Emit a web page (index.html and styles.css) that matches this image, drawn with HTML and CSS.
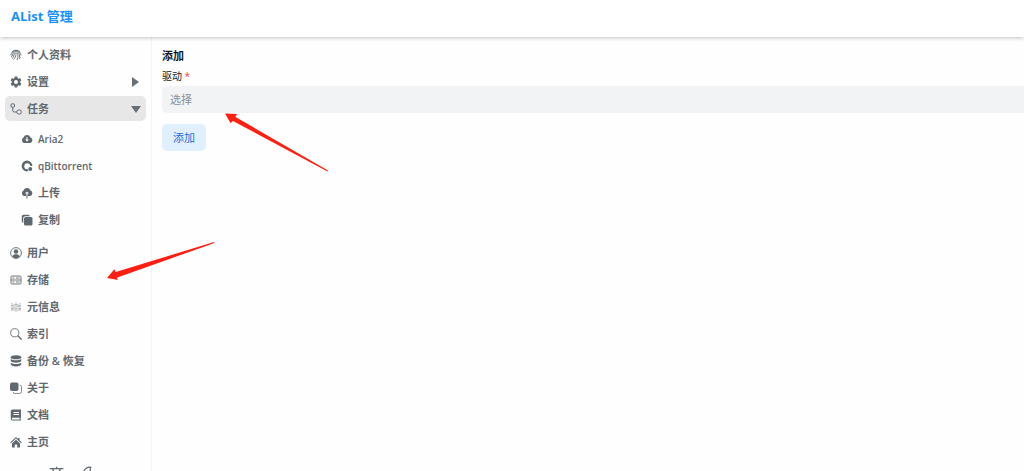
FILE: index.html
```
<!DOCTYPE html>
<html lang="zh-CN">
<head>
<meta charset="utf-8">
<meta name="viewport" content="width=device-width, initial-scale=1">
<title>AList 管理</title>
<link rel="stylesheet" href="styles.css">
</head>
<body>
<header class="header"><a class="brand" href="#">AList 管理</a></header>
<div class="layout">
  <nav class="sidebar">
    <a class="item" href="#"><svg class="icon" viewBox="0 0 24 24" fill="none" stroke="currentColor" stroke-width="1.700"><path d="M4 6a10.500 10.500 0 0 1 16 0M2 13a10 10 0 0 1 20 0M2 16q3-1 3-4a7 7 0 0 1 14 0v5M4 19q4-2 4-7a4 4 0 0 1 8 0q0 6-2 10M7 21q5-4 5-10M18 20l3-4"/></svg>个人资料</a>
    <button class="item" type="button"><svg class="icon" viewBox="0 0 24 24" fill="currentColor" fill-rule="evenodd"><path d="M9.500 1h5l.7 3.300 1.800 1 3.200-1.100 2.500 4.300-2.500 2.300v2.400l2.500 2.300-2.500 4.300-3.200-1.100-1.800 1-.7 3.300h-5l-.7-3.300-1.800-1-3.200 1.100-2.500-4.300 2.500-2.300v-2.400L1.300 8.500l2.500-4.300L7 5.300l1.800-1zM12 8a4 4 0 1 0 0 8 4 4 0 0 0 0-8z"/></svg>设置<svg class="caret" viewBox="0 0 10 10"><path d="M1 0l7 5-7 5z"/></svg></button>
    <button class="item active" type="button"><svg class="icon" viewBox="0 0 24 24" fill="none" stroke="currentColor" stroke-width="2"><rect x="2" y="1.500" width="7" height="7" rx="2.500"/><rect x="14" y="14" width="8.500" height="8" rx="3"/><path d="M5.500 9v6q0 3 3 3H14"/></svg>任务<svg class="caret" viewBox="0 0 10 10"><path d="M0 2h10L5 9z"/></svg></button>
    <div class="submenu">
      <a class="item latin" href="#"><svg class="icon" viewBox="0 0 24 24" fill="currentColor" fill-rule="evenodd"><path d="M6 20a6 6 0 0 1-1-11 7.500 7.500 0 0 1 14 0 5.700 5.700 0 0 1-1 11zM11 8v5H8l4 4 4-4h-3V8z"/></svg>Aria2</a>
      <a class="item latin" href="#"><svg class="icon" viewBox="0 0 24 24" fill="currentColor"><path d="M22.800 12A10.800 10.800 0 1 0 12 22.800v-4.300A6 6 0 1 1 18.500 12z"/><circle cx="18.500" cy="18" r="4"/><circle cx="12.500" cy="20.500" r="2"/></svg>qBittorrent</a>
      <a class="item" href="#"><svg class="icon" viewBox="0 0 24 24" fill="currentColor" fill-rule="evenodd"><path d="M6 18a6 6 0 0 1-1-11 7.500 7.500 0 0 1 14 0 5.700 5.700 0 0 1-1 11h-5v-5h3l-4-4-4 4h3v5z"/><path d="M11 17h2v6h-2z"/></svg>上传</a>
      <a class="item" href="#"><svg class="icon" viewBox="0 0 24 24" fill="currentColor"><rect x="6" y="6" width="17" height="17" rx="3"/><path d="M4.500 18A4 4 0 0 1 1.500 14V5A3.500 3.500 0 0 1 5 1.500h9a4 4 0 0 1 4 3H8a3.500 3.500 0 0 0-3.500 3.500z"/></svg>复制</a>
    </div>
    <a class="item" href="#"><svg class="icon" viewBox="0 0 24 24" fill="currentColor"><circle cx="12" cy="12" r="10.800" fill="none" stroke="currentColor" stroke-width="1.800"/><circle cx="12" cy="9" r="4.500"/><path d="M4.500 19c1-3 4-4.500 7.500-4.500s6.500 1.500 7.500 4.500a10 10 0 0 1-15 0z"/></svg>用户</a>
    <a class="item" href="#"><svg class="icon" viewBox="0 0 24 24" fill="none" stroke="currentColor" stroke-width="1.800"><rect x="2" y="4" width="20" height="16" rx="2"/><path d="M2 12h20M5 8h4M12 8h7M5 16h4M12 16h7"/></svg>存储</a>
    <a class="item" href="#"><svg class="icon thin" viewBox="0 0 24 24" fill="none" stroke="currentColor" stroke-width="1.200"><path d="M4 4v3M4 10v10M8 6v4M8 13v7M12 3v3M12 8v5M12 16v6M16 6v4M16 13v7M20 4v3M20 10v10M2 9h4M6 12h4M10 7h4M10 15h4M14 11h4M18 9h4M2 16h4M18 16h4"/></svg>元信息</a>
    <a class="item" href="#"><svg class="icon" viewBox="0 0 24 24" fill="none" stroke="currentColor"><circle cx="9.500" cy="9.500" r="8.200" stroke-width="1.700"/><path stroke-width="2.500" stroke-linecap="round" d="M16 16l6.500 6.500"/></svg>索引</a>
    <a class="item" href="#"><svg class="icon" viewBox="0 0 24 24" fill="currentColor"><ellipse cx="12" cy="4.500" rx="10.500" ry="4"/><path d="M1.500 8c4 3.500 17 3.500 21 0v4c-2 4.500-19 4.500-21 0zM1.500 15.500c4 3.500 17 3.500 21 0V19c-2 5-19 5-21 0z"/></svg>备份 &amp; 恢复</a>
    <a class="item" href="#"><svg class="icon" viewBox="0 0 24 24" fill="currentColor"><rect x="0" y="1" width="17" height="17" rx="4"/><path d="M19.500 6.500a3 3 0 0 1 3.500 3V19a4 4 0 0 1-4 4h-9a3 3 0 0 1-3.500-3" fill="none" stroke="currentColor" stroke-width="1.500"/></svg>关于</a>
    <a class="item" href="#"><svg class="icon" viewBox="0 0 24 24" fill="currentColor" fill-rule="evenodd"><path d="M5 1h17v16.500h-1V21h1v2H5a3.500 3.500 0 0 1-3.500-3.500v-15A3.500 3.500 0 0 1 5 1zM7 6v1.800h11V6zM7 10v1.800h11V10zM5.500 17.500a1.700 1.700 0 0 0 0 3.500H19v-3.500z"/></svg>文档</a>
    <a class="item" href="#"><svg class="icon" viewBox="0 0 24 24" fill="currentColor"><path d="M12 2l4 3.800V4h3v4.600l4.500 4.200-1.500 1.500L12 5.200 2 14.300.5 12.800z"/><path d="M12 7.500l8 7.300V23h-5.500v-6h-5v6H4v-8.200z"/></svg>主页</a>
    <div class="tools">
      <button class="tool" type="button" aria-label="语言"><svg viewBox="0 0 24 24" fill="none" stroke="currentColor" stroke-width="2"><path d="M1 4h22M12 1v3M6 5c2 7 6 11 12 14M18 5c-2 7-6 11-12 14"/></svg></button>
      <button class="tool" type="button" aria-label="主题"><svg viewBox="0 0 24 24" fill="none" stroke="currentColor" stroke-width="2"><path d="M14 2A10 10 0 1 0 22 15C15 17 11 10 14 2z"/></svg></button>
    </div>
  </nav>
  <main class="content">
    <h1 class="title">添加</h1>
    <label class="label" for="driver">驱动 <span class="required">*</span></label>
    <select class="select" id="driver"><option>选择</option></select>
    <button class="submit" type="button">添加</button>
  </main>
</div>
<svg class="arrows" width="340" height="290" viewBox="0 0 340 290" aria-hidden="true"><path d="M225 113.500L237 114 235.500 117 328 170.500 327.500 171.500 233 121 230.500 123zM107 278L114.300 269.300 115.700 272 214 242 214.500 243 116.700 277.700 118 280z"/></svg>
</body>
</html>
```
FILE: styles.css
```
* { box-sizing: border-box; }

body {
  margin: 0;
  height: 100vh;
  overflow: hidden;
  display: flex;
  flex-direction: column;
  background: #fefefe;
  color: #11181c;
  font: 11px/16px "Open Sans", "Noto Sans CJK SC", sans-serif;
}

button, select { font: inherit; }

.header {
  flex: none;
  position: relative;
  padding: 4px 11px 9px;
  background: #fff;
  box-shadow: 0 1px 4px rgba(0, 0, 0, 0.24);
}

.brand {
  display: block;
  color: #1890ff;
  font-size: 13px;
  line-height: 24px;
  font-weight: 700;
  text-decoration: none;
}

.layout {
  flex: 1;
  min-height: 0;
  display: flex;
}

.sidebar {
  flex: none;
  width: 152px;
  padding: 5px;
  overflow: hidden;
  display: flex;
  flex-direction: column;
  gap: 2px;
  border-right: 1px solid #f3f3f4;
}

.item {
  flex: none;
  height: 25px;
  padding: 0 5px;
  display: flex;
  align-items: center;
  gap: 5px;
  border: 0;
  border-radius: 5px;
  background: none;
  color: #5f686e;
  font-weight: 600;
  text-align: left;
  text-decoration: none;
}

.sidebar > .item { width: 141px; }

.latin { font-size: 10px; }

.active { background: #e7e7e7; }

.icon { flex: none; width: 12px; height: 12px; }

.thin { opacity: 0.8; }

.caret {
  width: 10px;
  height: 10px;
  margin-left: auto;
  fill: #687076;
}

.submenu {
  flex: none;
  padding: 3px 0 6px 11px;
  display: flex;
  flex-direction: column;
  gap: 2px;
}

.tools {
  flex: none;
  padding: 10px 6px 0 0;
  display: flex;
  justify-content: center;
  gap: 18px;
}

.tool {
  width: 15px;
  height: 15px;
  padding: 0;
  border: 0;
  background: none;
  color: #5f686e;
}

.tool svg { display: block; width: 15px; height: 15px; }

.content {
  flex: 1;
  min-width: 0;
  padding: 11px 0 0 10px;
  display: flex;
  flex-direction: column;
  align-items: flex-start;
}

.title {
  margin: 0 0 4px;
  font-size: 11px;
  line-height: 16px;
  font-weight: 700;
}

.label {
  margin-bottom: 2px;
  font-size: 10px;
  line-height: 16px;
}

.required { color: #e5484d; }

.select {
  width: 100%;
  height: 27px;
  margin-bottom: 11px;
  padding: 0 8px;
  appearance: none;
  border: 0;
  border-radius: 5px 0 0 5px;
  background: #f1f3f5;
  color: #899197;
}

.submit {
  height: 27px;
  padding: 0 11px;
  border: 0;
  border-radius: 5px;
  background: #e1f0ff;
  color: #1770e0;
}

.arrows {
  position: absolute;
  top: 0;
  left: 0;
  fill: #ff1f12;
  pointer-events: none;
}
```
